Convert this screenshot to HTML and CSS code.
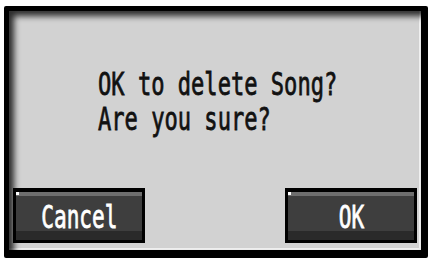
FILE: index.html
```html
<!DOCTYPE html>
<html>
<head>
<meta charset="utf-8">
<link rel="stylesheet" href="styles.css">
</head>
<body>
<div class="screen">
  <div class="panel">
    <div class="message">
      <div class="line"><span class="lcd">OK to delete Song?</span></div>
      <div class="line"><span class="lcd">Are you sure?</span></div>
    </div>
    <div class="buttons">
      <div class="btn"><div class="btn-face"><span class="lcd">Cancel</span></div></div>
      <div class="btn"><div class="btn-face"><span class="lcd">OK</span></div></div>
    </div>
  </div>
</div>
</body>
</html>
```
FILE: styles.css
```css
html, body {
  margin: 0;
  padding: 0;
  background: #fff;
}
body {
  width: 431px;
  height: 262px;
  overflow: hidden;
}
.screen {
  margin: 6px 0 0 4px;
  width: 424px;
  height: 252px;
  box-sizing: border-box;
  background: #000;
  border-radius: 2px;
  padding: 5px 7px 8px 5px;
}
.panel {
  height: 100%;
  box-sizing: border-box;
  background: #d2d2d2;
  box-shadow: inset 5px 5px 6px rgba(0,0,0,0.8), inset -2px -2px 0 #f2f2f2;
  display: flex;
  flex-direction: column;
  padding: 0 4px 7px 4px;
}
.message {
  flex: 1;
  padding: 55px 0 0 85px;
  color: #111;
}
.line {
  height: 35px;
  display: flex;
  align-items: center;
}
.lcd {
  display: inline-block;
  font-family: "DejaVu Sans Mono", monospace;
  font-weight: normal;
  -webkit-text-stroke: 0.6px currentColor;
  font-size: 24px;
  line-height: 24px;
  white-space: pre;
  transform: scale(0.92, 1.32);
  transform-origin: left center;
}
.buttons {
  display: flex;
  justify-content: space-between;
}
.btn {
  width: 132px;
  height: 55px;
  box-sizing: border-box;
  background: #000;
  padding: 4px 3px 3px 3px;
  position: relative;
  display: flex;
}
.btn-face {
  flex: 1;
  display: flex;
  align-items: center;
  justify-content: center;
  background: linear-gradient(#6e6e6e 0, #6e6e6e 4px, #3e3e3e 4px, #3e3e3e 39px, #2a2a2a 39px);
  color: #fff;
  padding-top: 2px;
}
.btn-face .lcd {
  transform: scale(0.88, 1.32);
  transform-origin: center center;
}
.btn::before {
  content: "";
  position: absolute;
  left: 3px;
  top: 4px;
  width: 3px;
  height: 3px;
  background: #fff;
}
```
